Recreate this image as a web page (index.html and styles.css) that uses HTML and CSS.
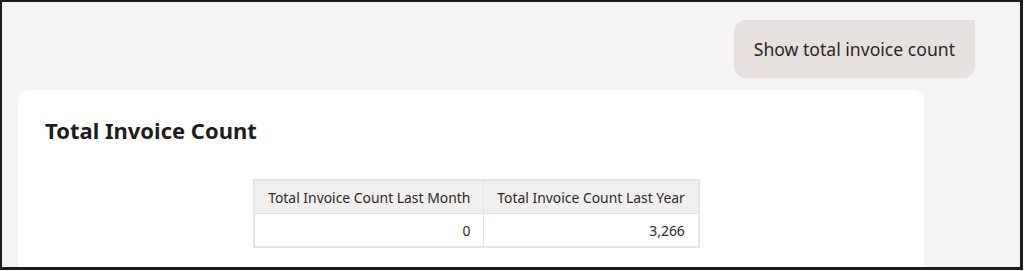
FILE: index.html
```html
<!DOCTYPE html>
<html>

<head>
  <title>Invoice assistant</title>
  <link rel="stylesheet" href="styles.css">
</head>

<body>
  <div class="frame">
    <div class="conversation">

      <!-- question asked by the user -->
      <div class="userRow">
        <div class="bubble">Show total invoice count</div>
      </div>

      <!-- answer card -->
      <div class="card">
        <h2 class="cardTitle">Total Invoice Count</h2>
        <div class="tableWrap">
          <table class="dataTable">
            <thead>
              <tr>
                <th>Total Invoice Count Last Month</th>
                <th>Total Invoice Count Last Year</th>
              </tr>
            </thead>
            <tbody>
              <tr>
                <td>0</td>
                <td>3,266</td>
              </tr>
            </tbody>
          </table>
        </div>
      </div>

    </div>
  </div>
</body>

</html>
```

FILE: styles.css
```css
html,
body {
  margin: 0;
  background: #ffffff;
}

body {
  font-family: "Noto Sans", "Open Sans", sans-serif;
  color: #1f1d1b;
}

.frame {
  box-sizing: border-box;
  width: 1023px;
  height: 270px;
  border-style: solid;
  border-color: #1c1c1c;
  border-width: 2px 3px 3px 2px;
  background: #f5f4f2;
  overflow: hidden;
}

.conversation {
  display: flex;
  flex-direction: column;
  padding: 18px 45px 0 16px;
}

.userRow {
  display: flex;
  justify-content: flex-end;
}

.bubble {
  background: #e5e1de;
  border-radius: 12px 0 12px 12px;
  padding: 0 20px;
  height: 58px;
  display: flex;
  align-items: center;
  font-size: 17.6px;
  color: #2a2725;
}

.card {
  margin-top: 12px;
  margin-right: 51px;
  background: #ffffff;
  border-radius: 12px;
  padding: 23px 27px 30px 27px;
}

.cardTitle {
  margin: 0;
  font-size: 22px;
  line-height: 34px;
  font-weight: 700;
  color: #1f1d1b;
}

.tableWrap {
  display: flex;
  justify-content: center;
  padding-left: 11px;
  margin-top: 32px;
}

.dataTable {
  border-collapse: collapse;
  font-size: 13.9px;
  color: #2d2a28;
  border: 2px solid #e6e5e3;
}

.dataTable th,
.dataTable td {
  border: 1px solid #e6e5e3;
  padding: 0 13px;
  height: 32px;
  white-space: nowrap;
}

.dataTable th {
  background: #f1f0ef;
  font-weight: 400;
  text-align: center;
}

.dataTable td {
  text-align: right;
  background: #ffffff;
}
```
